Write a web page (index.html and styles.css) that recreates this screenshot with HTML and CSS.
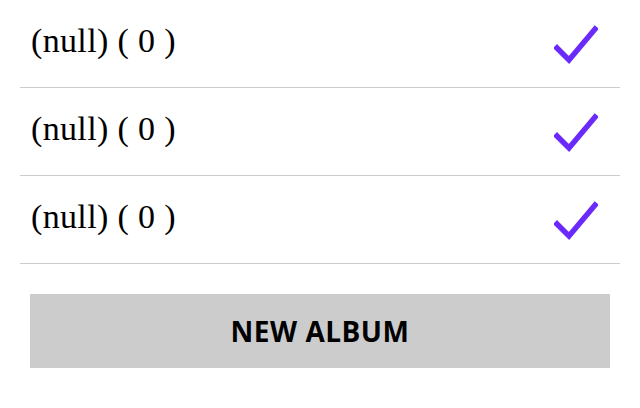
FILE: index.html
```html
<!DOCTYPE html>
<html>
<head>
<meta charset="utf-8">
<link rel="stylesheet" href="styles.css">
</head>
<body>
<div class="page">
  <ul class="list">
    <li class="row"><span class="name">(null) ( 0 )</span>
      <svg class="check" width="44" height="40" viewBox="0 0 44 40"><polyline points="3,23 15,35 41,4" fill="none" stroke="#6a2bfa" stroke-width="5.5" stroke-linecap="square" stroke-linejoin="miter"/></svg>
    </li>
    <li class="row"><span class="name">(null) ( 0 )</span>
      <svg class="check" width="44" height="40" viewBox="0 0 44 40"><polyline points="3,23 15,35 41,4" fill="none" stroke="#6a2bfa" stroke-width="5.5" stroke-linecap="square" stroke-linejoin="miter"/></svg>
    </li>
    <li class="row"><span class="name">(null) ( 0 )</span>
      <svg class="check" width="44" height="40" viewBox="0 0 44 40"><polyline points="3,23 15,35 41,4" fill="none" stroke="#6a2bfa" stroke-width="5.5" stroke-linecap="square" stroke-linejoin="miter"/></svg>
    </li>
  </ul>
  <div class="actions">
    <button class="new-album">NEW ALBUM</button>
  </div>
</div>
</body>
</html>
```
FILE: styles.css
```css
html, body {
  margin: 0;
  padding: 0;
  background: #ffffff;
}
.page {
  width: 640px;
  padding: 0 20px;
  box-sizing: border-box;
}
.list {
  list-style: none;
  margin: 0;
  padding: 0;
}
.row {
  height: 87px;
  border-bottom: 1px solid #cccccc;
  display: flex;
  align-items: center;
  justify-content: space-between;
  padding: 0 22px 0 11px;
}
.name {
  font-family: "Liberation Serif", serif;
  font-size: 34px;
  line-height: 40px;
  letter-spacing: 0.35px;
  color: #000;
  margin-top: -6px;
}
.check {
  display: block;
  margin-top: 2px;
}
.actions {
  padding: 30px 10px 0;
}
.new-album {
  display: block;
  width: 100%;
  height: 74px;
  border: none;
  background: #cccccc;
  font-family: "Open Sans", sans-serif;
  font-weight: 700;
  font-size: 28px;
  letter-spacing: 0.5px;
  color: #000;
  padding: 0;
  margin: 0;
}
```
